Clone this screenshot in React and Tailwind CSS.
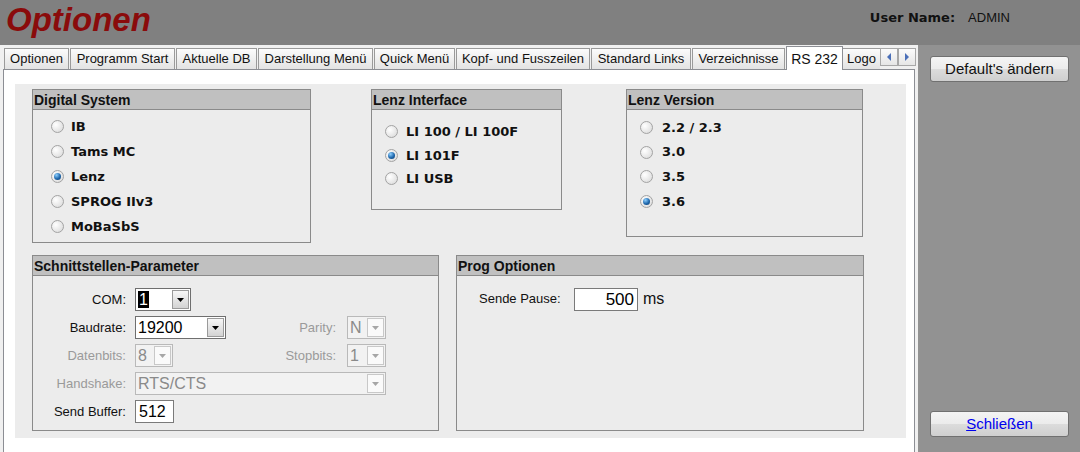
import React from 'react';

const tabs = [
  { label: 'Optionen', w: 'w-[65px]' },
  { label: 'Programm Start', w: 'w-[105px]' },
  { label: 'Aktuelle DB', w: 'w-[81px]' },
  { label: 'Darstellung Menü', w: 'w-[115px]' },
  { label: 'Quick Menü', w: 'w-[81px]' },
  { label: 'Kopf- und Fusszeilen', w: 'w-[134px]' },
  { label: 'Standard Links', w: 'w-[100px]' },
  { label: 'Verzeichnisse', w: 'w-[93px]' },
];

const Radio = ({ checked }) => (
  <span className="w-[13px] h-[13px] shrink-0 rounded-full border border-[#a3a3a3] bg-[radial-gradient(circle_at_35%_35%,#ffffff,#d6d6d6)] flex items-center justify-center">
    {checked && (
      <span className="w-[7px] h-[7px] rounded-full bg-[radial-gradient(circle_at_35%_30%,#8fd0ff,#1f68ad_55%,#0c3868)]" />
    )}
  </span>
);

const Group = ({ title, className, children }) => (
  <div className={`border border-[#8a8a8a] flex flex-col bg-[#ececec] ${className}`}>
    <div className="h-[20px] bg-[#c0c0c0] border-b border-[#8a8a8a] pl-[1px] text-[14px] font-bold leading-[20px] text-[#111]">
      {title}
    </div>
    {children}
  </div>
);

const RadioList = ({ items, checked, rowH, pt, pl, gap }) => (
  <div className={`flex flex-col ${pt} ${pl}`}>
    {items.map((it) => (
      <div key={it} className={`flex items-center ${rowH} ${gap}`}>
        <Radio checked={it === checked} />
        <span className="font-['DejaVu_Sans',sans-serif] font-bold text-[13px] text-[#111]">{it}</span>
      </div>
    ))}
  </div>
);

const Arrow = ({ disabled }) => (
  <svg width="7" height="4" viewBox="0 0 7 4">
    <polygon points="0,0 7,0 3.5,4" fill={disabled ? '#a6a6a6' : '#000'} />
  </svg>
);

const Select = ({ value, className, disabled, selected }) => (
  <div
    className={`flex h-[23px] items-center border ${className} ${
      disabled ? 'border-[#b9b9b9] bg-[#f2f2f2] text-[#8a8a8a]' : 'border-[#6f6f6f] bg-white text-black'
    }`}
  >
    <div className="flex-1 min-w-0 pl-[2px] text-[16px] leading-[19px] whitespace-nowrap overflow-hidden">
      {selected ? <span className="bg-black text-white px-[1px]">{value}</span> : value}
    </div>
    <div
      className={`w-[17px] h-[19px] mr-[1px] flex items-center justify-center border ${
        disabled
          ? 'border-[#c8c8c8] bg-[#fafafa]'
          : 'border-[#9a9a9a] bg-[linear-gradient(#f7f7f7,#d3d3d3)]'
      }`}
    >
      <Arrow disabled={disabled} />
    </div>
  </div>
);

const Label = ({ children, className, disabled }) => (
  <span className={`text-[13px] text-right ${disabled ? 'text-[#9a9a9a]' : 'text-[#111]'} ${className}`}>{children}</span>
);

const WinButton = ({ children }) => (
  <button className="w-[139px] h-[26px] ml-[12px] rounded-[3px] border border-[#707070] bg-[linear-gradient(#f4f4f4_0%,#ebebeb_50%,#dcdcdc_50%,#cfcfcf_100%)] text-[15px] text-[#111] leading-[24px]">
    {children}
  </button>
);

export default function App() {
  return (
    <div className="w-[1080px] h-[452px] overflow-hidden flex flex-col bg-[#f0f0f0] font-['Liberation_Sans',Arial,sans-serif]">
      {/* Kopfzeile */}
      <header className="h-[45px] shrink-0 bg-[#808080] flex items-start justify-between">
        <h1 className="pl-[6px] pt-[1px] text-[33px] leading-[38px] font-bold italic text-[#8a0b0b]">Optionen</h1>
        <div className="flex items-center gap-[13px] pt-[8px] pr-[70px] text-[13px] text-[#111]">
          <span className="font-['DejaVu_Sans',sans-serif] font-bold">User Name:</span>
          <span>ADMIN</span>
        </div>
      </header>

      <div className="flex flex-1 min-h-0">
        <div className="w-[918px] flex flex-col">
          {/* Reiter */}
          <div className="h-[24px] shrink-0 flex items-end pl-[4px] text-[13px] text-[#111]">
            {tabs.map((t) => (
              <div
                key={t.label}
                className={`${t.w} mr-[1px] h-[21px] border-t border-l border-r border-[#9a9a9a] bg-[linear-gradient(#fbfbfb,#e3e3e3)] flex items-center justify-center whitespace-nowrap`}
              >
                {t.label}
              </div>
            ))}
            <div className="relative z-10 -mb-px w-[57px] h-[24px] border-t border-l border-r border-[#8c8e94] bg-white flex items-start justify-center pt-[2px] text-[14px]">
              RS 232
            </div>
            <div className="w-[37px] h-[21px] border-t border-[#9a9a9a] bg-[linear-gradient(#fbfbfb,#e3e3e3)] overflow-hidden whitespace-nowrap pl-[4px] leading-[20px]">
              Logo
            </div>
            <div className="self-start mt-[3px] flex">
              {['M5 1 L1 5 L5 9 Z', 'M1 1 L5 5 L1 9 Z'].map((d) => (
                <div key={d} className="w-[18px] h-[18px] border border-[#a8a8a8] bg-[linear-gradient(#fbfbfb,#e6e6e6)] flex items-center justify-center">
                  <svg width="6" height="10" viewBox="0 0 6 10">
                    <path d={d} fill="#4a6fb8" />
                  </svg>
                </div>
              ))}
            </div>
          </div>

          {/* Inhalt */}
          <div className="ml-[3px] w-[912px] flex-1 bg-white border-l border-t border-r border-[#8c8e94] pl-[11px] pt-[14px] pr-[8px] pb-[14px] flex">
            <div className="flex-1 bg-[#ececec] pl-[17px] pt-[5px] flex flex-col">
              <div className="flex items-start">
                <Group title="Digital System" className="w-[279px] h-[154px]">
                  <RadioList
                    items={['IB', 'Tams MC', 'Lenz', 'SPROG IIv3', 'MoBaSbS']}
                    checked="Lenz"
                    rowH="h-[25px]"
                    pt="pt-[4px]"
                    pl="pl-[18px]"
                    gap="gap-[7px]"
                  />
                </Group>
                <Group title="Lenz Interface" className="w-[191px] h-[121px] ml-[60px]">
                  <RadioList
                    items={['LI 100 / LI 100F', 'LI 101F', 'LI USB']}
                    checked="LI 101F"
                    rowH="h-[23.5px]"
                    pt="pt-[10px]"
                    pl="pl-[13px]"
                    gap="gap-[8px]"
                  />
                </Group>
                <Group title="Lenz Version" className="w-[237px] h-[148px] ml-[64px]">
                  <RadioList
                    items={['2.2 / 2.3', '3.0', '3.5', '3.6']}
                    checked="3.6"
                    rowH="h-[24.7px]"
                    pt="pt-[5px]"
                    pl="pl-[13px]"
                    gap="gap-[9px]"
                  />
                </Group>
              </div>

              <div className="flex items-start mt-[12px]">
                <Group title="Schnittstellen-Parameter" className="w-[407px] h-[176px]">
                  <div className="flex flex-col gap-[5px] pt-[12px]">
                    <div className="flex items-center h-[23px]">
                      <Label className="w-[93px]">COM:</Label>
                      <Select value="1" selected className="ml-[9px] w-[56px]" />
                    </div>
                    <div className="flex items-center h-[23px]">
                      <Label className="w-[93px]">Baudrate:</Label>
                      <Select value="19200" className="ml-[9px] w-[91px]" />
                      <Label disabled className="w-[110px]">Parity:</Label>
                      <Select value="N" disabled className="ml-[11px] w-[39px]" />
                    </div>
                    <div className="flex items-center h-[23px]">
                      <Label disabled className="w-[93px]">Datenbits:</Label>
                      <Select value="8" disabled className="ml-[9px] w-[38px]" />
                      <Label disabled className="w-[163px]">Stopbits:</Label>
                      <Select value="1" disabled className="ml-[11px] w-[39px]" />
                    </div>
                    <div className="flex items-center h-[23px]">
                      <Label disabled className="w-[93px]">Handshake:</Label>
                      <Select value="RTS/CTS" disabled className="ml-[9px] w-[251px]" />
                    </div>
                    <div className="flex items-center h-[23px]">
                      <Label className="w-[93px]">Send Buffer:</Label>
                      <div className="ml-[9px] w-[39px] h-[23px] border border-[#7a7a7a] bg-white pl-[3px] text-[16px] leading-[21px]">
                        512
                      </div>
                    </div>
                  </div>
                </Group>

                <Group title="Prog Optionen" className="w-[408px] h-[176px] ml-[17px]">
                  <div className="flex items-center pt-[11px] pl-[22px]">
                    <span className="w-[95px] text-[13px] text-[#111]">Sende Pause:</span>
                    <div className="w-[64px] h-[23px] border border-[#7a7a7a] bg-white pr-[3px] text-right text-[17px] leading-[21px]">
                      500
                    </div>
                    <span className="ml-[5px] text-[16px] text-[#111]">ms</span>
                  </div>
                </Group>
              </div>
            </div>
          </div>
        </div>

        {/* Seitenleiste */}
        <aside className="flex-1 bg-[#929292] flex flex-col justify-between pt-[11px] pb-[15px]">
          <WinButton>Default's ändern</WinButton>
          <WinButton>
            <span className="text-[#0000ee]">
              <span className="underline">S</span>chließen
            </span>
          </WinButton>
        </aside>
      </div>
    </div>
  );
}
